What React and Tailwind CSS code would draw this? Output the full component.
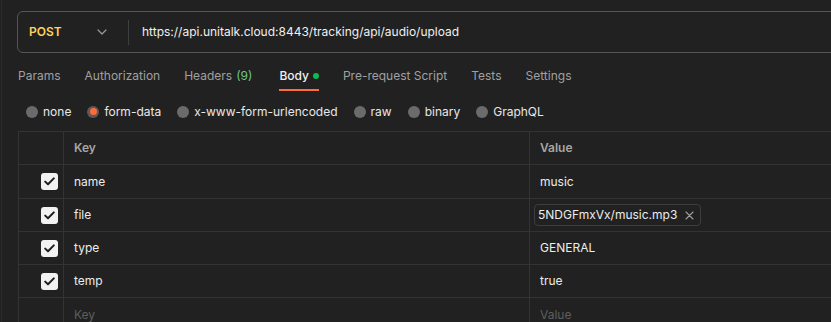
import React from 'react'

const tabs = [
  { label: 'Params' },
  { label: 'Authorization' },
  { label: 'Headers', count: '(9)' },
  { label: 'Body', active: true },
  { label: 'Pre-request Script' },
  { label: 'Tests' },
  { label: 'Settings' },
]

const bodyTypes = ['none', 'form-data', 'x-www-form-urlencoded', 'raw', 'binary', 'GraphQL']

const rows = [
  { key: 'name', value: 'music' },
  { key: 'file', value: '5NDGFmxVx/music.mp3', file: true },
  { key: 'type', value: 'GENERAL' },
  { key: 'temp', value: 'true' },
]

const Check = () => (
  <div className="w-[17px] h-[17px] rounded-[3px] bg-[#f2f2f2] flex items-center justify-center">
    <svg width="11" height="9" viewBox="0 0 11 9" fill="none">
      <path d="M1.2 4.6 L4 7.3 L9.8 1.4" stroke="#1e1e1e" strokeWidth="2" strokeLinecap="round" strokeLinejoin="round" />
    </svg>
  </div>
)

export default function App() {
  return (
    <div
      className="w-[831px] h-[322px] overflow-hidden bg-[#212121] text-[12px] relative"
      style={{ fontFamily: 'Inter, "Noto Sans", sans-serif' }}
    >
      {/* left pane edge */}
      <div className="absolute left-[1px] top-0 bottom-0 w-px bg-[#2c2c2c]" />

      <div className="pl-[17px]">
        {/* URL bar */}
        <div className="mt-[11px] w-[830px] h-[42px] border border-[#555555] rounded-[6px] flex items-center">
          <div className="w-[110px] flex items-center justify-between pl-[11px] pr-[21px]">
            <span className="text-[#ffd25c] font-semibold">POST</span>
            <svg width="10" height="6" viewBox="0 0 10 6" fill="none">
              <path d="M1 1 L5 5 L9 1" stroke="#9a9a9a" strokeWidth="1.2" strokeLinecap="round" strokeLinejoin="round" />
            </svg>
          </div>
          <div className="w-px h-[25px] bg-[#3f3f3f]" />
          <span className="pl-[13px] text-[#f0f0f0]">https://api.unitalk.cloud:8443/tracking/api/audio/upload</span>
        </div>

        {/* Tabs */}
        <div className="flex gap-6 mt-[7px] h-[31px] pl-px">
          {tabs.map((t) => (
            <div key={t.label} className="relative flex items-center">
              <span className={t.active ? 'text-[#f0f0f0] font-medium' : 'text-[#a0a0a0]'}>
                {t.label}
                {t.count && <span className="ml-[4px] text-[#6cc788]">{t.count}</span>}
              </span>
              {t.count && <span className="w-[3px]" />}
              {t.active && <span className="ml-[4px] w-[6px] h-[6px] rounded-full bg-[#0cbb52]" />}
              {t.active && <div className="absolute left-0 right-0 bottom-0 h-[2px] bg-[#ff6c37]" />}
            </div>
          ))}
        </div>

        {/* Body types */}
        <div className="flex gap-4 mt-[1px] h-[39px] items-center pl-[9px]">
          {bodyTypes.map((b) => (
            <div key={b} className="flex items-center gap-[5px]">
              {b === 'form-data' ? (
                <span className="shrink-0 w-[12px] h-[12px] rounded-full bg-[#5a5a5a] flex items-center justify-center">
                  <span className="w-[7px] h-[7px] rounded-full bg-[#ff6c37]" />
                </span>
              ) : (
                <span className="shrink-0 w-[12px] h-[12px] rounded-full bg-[#6b6b6b]" />
              )}
              <span className="text-[#e8e8e8]">{b}</span>
            </div>
          ))}
        </div>

        {/* Table */}
        <div className="ml-px border-l border-t border-[#333333]">
          <div className="flex h-[33px] border-b border-[#333333]">
            <div className="w-[45px] border-r border-[#333333]" />
            <div className="w-[466px] border-r border-[#333333] flex items-center pl-[10px] text-[#a6a6a6] font-semibold">Key</div>
            <div className="flex-1 flex items-center pl-[10px] text-[#a6a6a6] font-semibold">Value</div>
          </div>
          {rows.map((r, i) => (
            <div key={r.key} className={`flex border-b border-[#333333] ${i === 0 ? 'h-[34px]' : 'h-[33px]'}`}>
              <div className="w-[45px] border-r border-[#333333] flex items-center justify-end pr-[5px]">
                <Check />
              </div>
              <div className="w-[466px] border-r border-[#333333] flex items-center pl-[10px] text-[#ececec]">{r.key}</div>
              <div className="flex-1 flex items-center pl-[10px] text-[#ececec]">
                {r.file ? (
                  <div className="-ml-[6px] h-[22px] flex items-center gap-[8px] border border-[#3d3d3d] rounded-[4px] pl-[3px] pr-[6px]">
                    <span>{r.value}</span>
                    <svg width="9" height="9" viewBox="0 0 9 9" fill="none">
                      <path d="M1 1 L8 8 M8 1 L1 8" stroke="#a0a0a0" strokeWidth="1.1" strokeLinecap="round" />
                    </svg>
                  </div>
                ) : (
                  r.value
                )}
              </div>
            </div>
          ))}
          <div className="flex h-[33px]">
            <div className="w-[45px] border-r border-[#333333]" />
            <div className="w-[466px] border-r border-[#333333] flex items-center pl-[10px] text-[#5e5e5e]">Key</div>
            <div className="flex-1 flex items-center pl-[10px] text-[#5e5e5e]">Value</div>
          </div>
        </div>
      </div>
    </div>
  )
}
